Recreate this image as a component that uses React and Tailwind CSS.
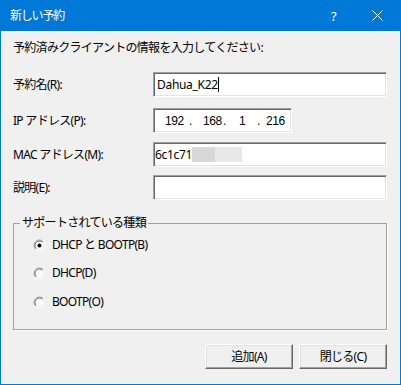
import React from 'react';

const font = { fontFamily: '"Noto Sans", "Noto Sans CJK JP", sans-serif' };

const Field = ({ className = '', children }) => (
  <div
    className={`h-[25px] bg-white border-t border-l border-t-[#a0a0a0] border-l-[#a0a0a0] border-b border-r border-b-white border-r-white shadow-[inset_1px_1px_0_#696969,inset_-1px_-1px_0_#e3e3e3] flex items-center ${className}`}
  >
    {children}
  </div>
);

const Row = ({ label, className = '', children }) => (
  <div className={`flex items-center ${className}`}>
    <div className="w-[140px] text-[12px] leading-[16px] text-black">{label}</div>
    {children}
  </div>
);

const Radio = ({ checked, label, className = '' }) => (
  <div className={`flex items-center h-[16px] pl-[19px] ${className}`}>
    <svg width="13" height="13" viewBox="0 0 13 13" className="shrink-0">
      <circle cx="6.5" cy="6.5" r="5.5" fill="#fff" />
      <path d="M2.6 10.4 A5.5 5.5 0 0 1 10.4 2.6" stroke="#a0a0a0" strokeWidth="1" fill="none" />
      <path d="M3.3 9.7 A4.5 4.5 0 0 1 9.7 3.3" stroke="#696969" strokeWidth="1" fill="none" />
      <path d="M10.4 2.6 A5.5 5.5 0 0 1 2.6 10.4" stroke="#fff" strokeWidth="1" fill="none" />
      <path d="M9.7 3.3 A4.5 4.5 0 0 1 3.3 9.7" stroke="#e3e3e3" strokeWidth="1" fill="none" />
      {checked && <circle cx="6.5" cy="6.5" r="2" fill="#000" />}
    </svg>
    <span className="ml-[6px] text-[12px] leading-[16px] text-black">{label}</span>
  </div>
);

const Button = ({ children }) => (
  <button className="w-[88px] h-[25px] bg-[#f0f0f0] border-t border-l border-t-white border-l-white border-b border-r border-b-[#696969] border-r-[#696969] shadow-[inset_-1px_-1px_0_#a0a0a0,inset_1px_1px_0_#e3e3e3] text-[12px] leading-[16px] text-black tracking-[-0.7px]">
    {children}
  </button>
);

export default function App() {
  return (
    <div className="w-[401px] h-[385px] flex flex-col bg-[#f0f0f0] border-x border-b border-[#0078d7] tracking-[-0.7px]" style={font}>
      <div className="h-[31px] shrink-0 bg-[#0078d7] flex items-center text-white -mx-px">
        <span className="ml-[10px] text-[12px] leading-[16px] tracking-[-1.2px]">新しい予約</span>
        <span className="ml-auto mr-[36px] text-[13px] leading-[16px]">?</span>
        <svg width="11" height="11" viewBox="0 0 11 11" className="mr-[18px]">
          <path d="M0.5 0.5 L10.5 10.5 M10.5 0.5 L0.5 10.5" stroke="#fff" strokeWidth="1" />
        </svg>
      </div>

      <div className="flex flex-col pl-[12px] pr-[13px]">
        <div className="mt-[9px] h-[16px] text-[12px] leading-[16px] text-black">
          予約済みクライアントの情報を入力してください:
        </div>

        <Row label="予約名(R):" className="mt-[16px]">
          <Field className="flex-1 pl-[3px]">
            <span className="text-[12px] leading-[16px] text-black tracking-[-0.3px]">Dahua_K22</span>
            <span className="w-px h-[15px] bg-black" />
          </Field>
        </Row>

        <Row label="IP アドレス(P):" className="mt-[11px]">
          <Field className="w-[139px]">
            <div className="flex items-center text-[12px] leading-[16px] text-black tracking-[-0.4px]" style={{ fontFamily: '"Liberation Sans", sans-serif' }}>
              <span className="ml-[11px] w-[24px]">192</span>
              <span className="w-[14px]">.</span>
              <span className="w-[20px]">168</span>
              <span className="w-[16px]">.</span>
              <span className="w-[18px]">1</span>
              <span className="w-[9px]">.</span>
              <span>216</span>
            </div>
          </Field>
        </Row>

        <Row label="MAC アドレス(M):" className="mt-[9px]">
          <Field className="flex-1 pl-[1px]">
            <span className="text-[12px] leading-[16px] text-black tracking-[-0.3px]">6c1c71</span>
            <span className="w-[23px] h-[15px] bg-[#d8d8d8]" />
            <span className="w-[27px] h-[15px] bg-[#e8e8e8]" />
          </Field>
        </Row>

        <Row label="説明(E):" className="mt-[8px]">
          <Field className="flex-1" />
        </Row>

        <fieldset className="mt-[15px] h-[115px] border border-[#a0a0a0] shadow-[1px_1px_0_#fff]">
          <legend className="ml-[6px] px-[2px] text-[12px] leading-[16px] text-black">サポートされている種類</legend>
          <Radio checked label="DHCP と BOOTP(B)" className="mt-[6px]" />
          <Radio label="DHCP(D)" className="mt-[12px]" />
          <Radio label="BOOTP(O)" className="mt-[13px]" />
        </fieldset>

        <div className="mt-[14px] flex justify-end gap-[6px]">
          <Button>追加(A)</Button>
          <Button>閉じる(C)</Button>
        </div>
      </div>
    </div>
  );
}
